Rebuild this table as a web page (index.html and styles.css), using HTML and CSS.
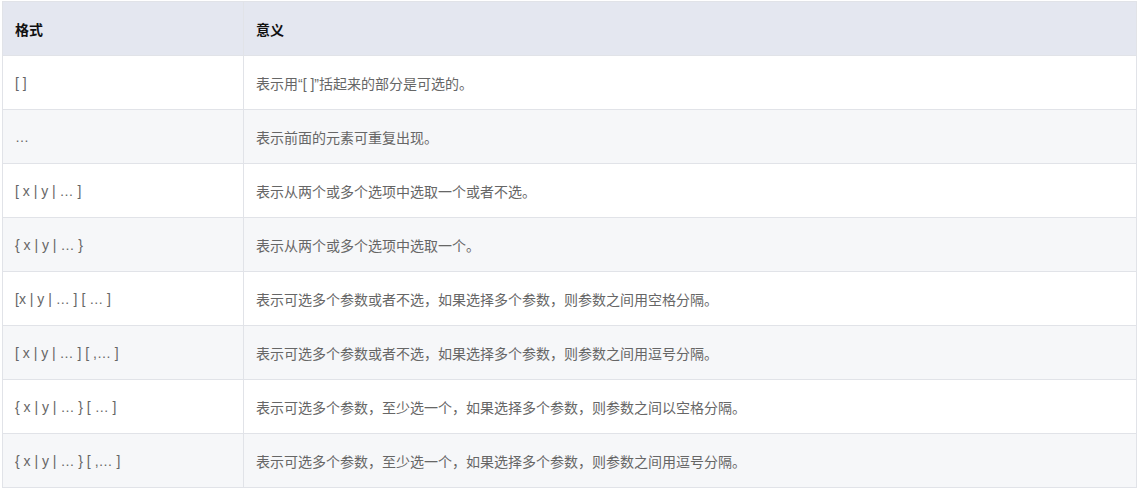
FILE: index.html
```html
<!DOCTYPE html>
<html lang="zh-CN">
<head>
<meta charset="utf-8">
<link rel="stylesheet" href="styles.css">
</head>
<body>
<div class="wrap">
<table class="syntax">
  <thead>
    <tr><th class="c1">格式</th><th>意义</th></tr>
  </thead>
  <tbody>
    <tr><td>[ ]</td><td>表示用“[ ]”括起来的部分是可选的。</td></tr>
    <tr><td>…</td><td>表示前面的元素可重复出现。</td></tr>
    <tr><td>[ x | y | … ]</td><td>表示从两个或多个选项中选取一个或者不选。</td></tr>
    <tr><td>{ x | y | … }</td><td>表示从两个或多个选项中选取一个。</td></tr>
    <tr><td>[x | y | … ] [ … ]</td><td>表示可选多个参数或者不选，如果选择多个参数，则参数之间用空格分隔。</td></tr>
    <tr><td>[ x | y | … ] [ ,… ]</td><td>表示可选多个参数或者不选，如果选择多个参数，则参数之间用逗号分隔。</td></tr>
    <tr><td>{ x | y | … } [ … ]</td><td>表示可选多个参数，至少选一个，如果选择多个参数，则参数之间以空格分隔。</td></tr>
    <tr><td>{ x | y | … } [ ,… ]</td><td>表示可选多个参数，至少选一个，如果选择多个参数，则参数之间用逗号分隔。</td></tr>
  </tbody>
</table>
</div>
</body>
</html>
```
FILE: styles.css
```css
html, body {
  margin: 0;
  padding: 0;
  background: #ffffff;
}
.wrap {
  padding: 1px 0 0 2px;
}
.syntax {
  border-collapse: collapse;
  width: 1135px;
  table-layout: fixed;
  font-family: "Liberation Sans", "Noto Sans CJK SC", sans-serif;
  font-size: 14px;
  color: #666666;
}
.syntax th, .syntax td {
  border: 1px solid #e1e3e8;
  height: 54px;
  padding: 0 12px;
  text-align: left;
  vertical-align: middle;
  box-sizing: border-box;
}
.syntax th {
  background: #e4e7f0;
  color: #111111;
  font-weight: bold;
}
.syntax th.c1 {
  width: 241px;
}
.syntax tbody tr:nth-child(even) td {
  background: #f6f7f9;
}
```
